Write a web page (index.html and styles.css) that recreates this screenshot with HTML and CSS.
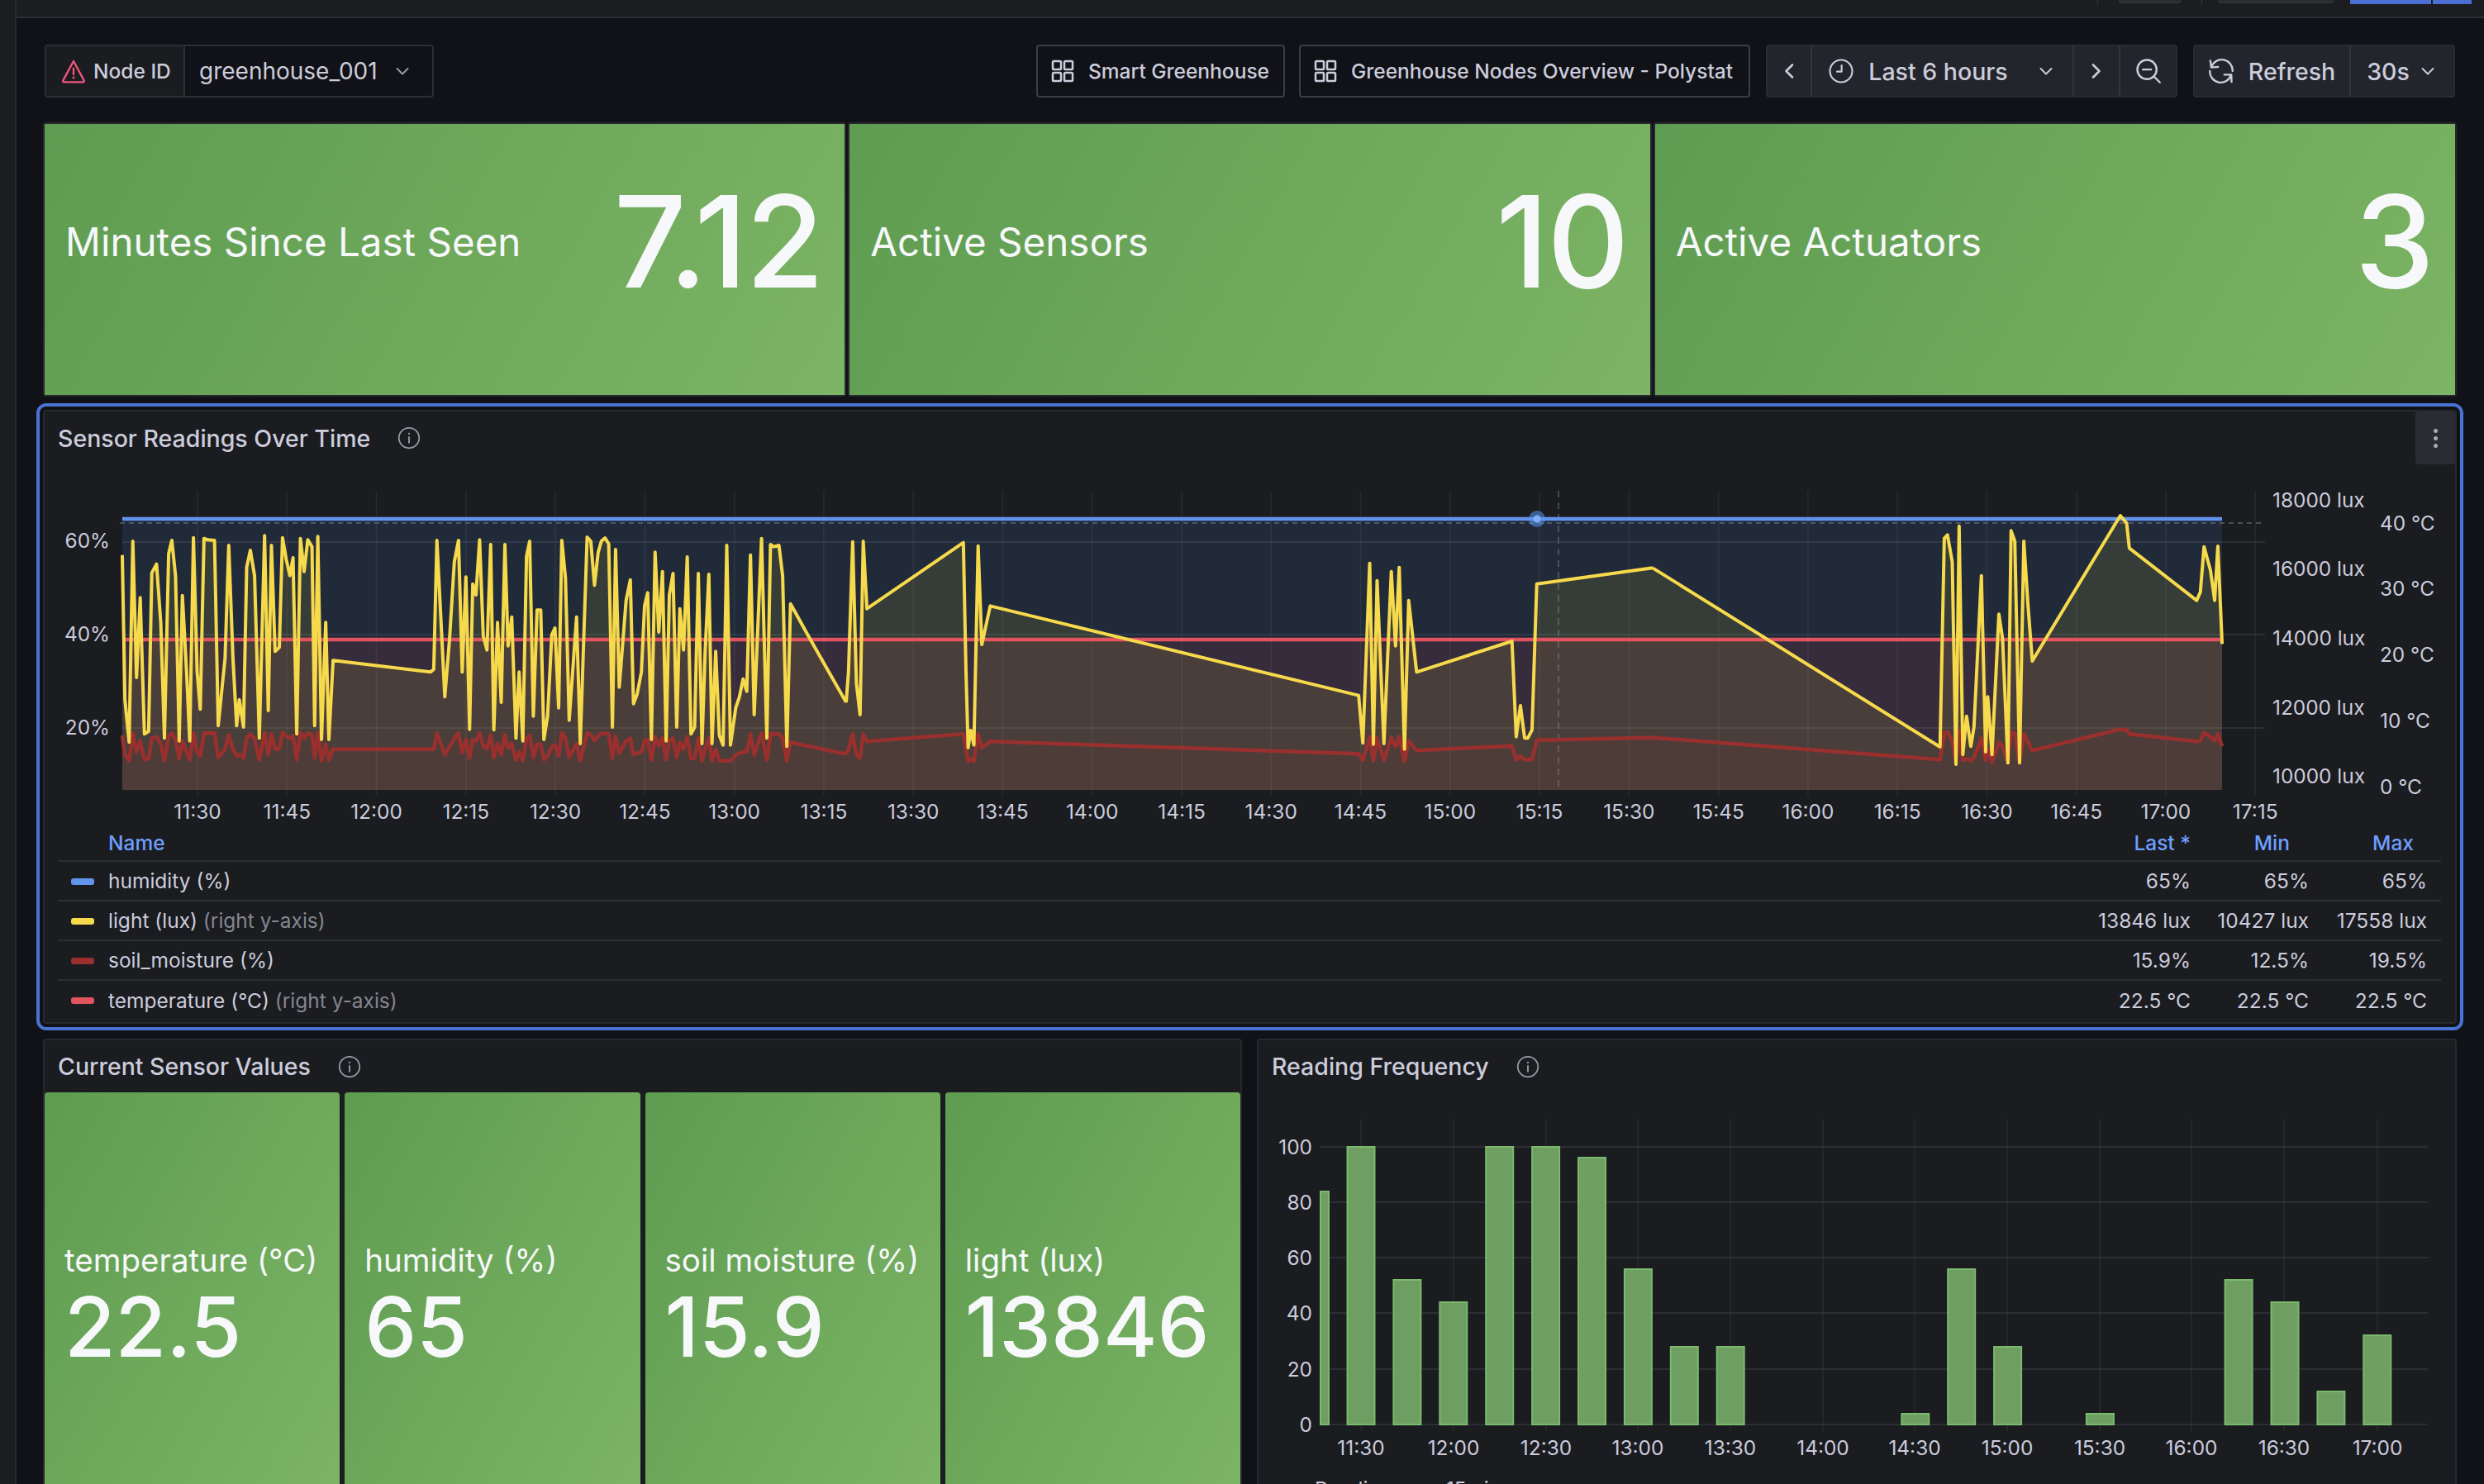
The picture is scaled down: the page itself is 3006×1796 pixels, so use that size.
FILE: index.html
```html
<!DOCTYPE html>
<html lang="en">
<head>
    <meta charset="UTF-8">
    <title>Greenhouse Node Details</title>
    <link rel="stylesheet" href="styles.css">
</head>
<body>
    <svg class="icon-defs" width="0" height="0">
        <symbol id="i-chevron-down" viewBox="0 0 24 24"><path d="M5.500 9l6.500 6.500L18.500 9" fill="none" stroke="currentColor" stroke-width="2" stroke-linecap="round" stroke-linejoin="round"/></symbol>
        <symbol id="i-chevron-left" viewBox="0 0 24 24"><path d="M16 4.500L8.500 12l7.500 7.500" fill="none" stroke="currentColor" stroke-width="2.600" stroke-linecap="round" stroke-linejoin="round"/></symbol>
        <symbol id="i-chevron-right" viewBox="0 0 24 24"><path d="M8 4.500l7.500 7.500L8 19.500" fill="none" stroke="currentColor" stroke-width="2.600" stroke-linecap="round" stroke-linejoin="round"/></symbol>
        <symbol id="i-apps" viewBox="0 0 24 24"><g fill="none" stroke="currentColor" stroke-width="1.900"><rect x="3" y="3" width="7.500" height="7.500" rx="1"/><rect x="13.500" y="3" width="7.500" height="7.500" rx="1"/><rect x="3" y="13.500" width="7.500" height="7.500" rx="1"/><rect x="13.500" y="13.500" width="7.500" height="7.500" rx="1"/></g></symbol>
        <symbol id="i-info" viewBox="0 0 24 24"><circle cx="12" cy="12" r="10.500" fill="none" stroke="currentColor" stroke-width="1.500"/><path d="M12 11v6" stroke="currentColor" stroke-width="1.600" stroke-linecap="round"/><circle cx="12" cy="7.600" r="1" fill="currentColor"/></symbol>
    </svg>

    <div class="sidebar"></div>

    <div class="page">
        <div class="topbar">
            <span class="top-sep"></span>
            <span class="top-btn top-btn-small"></span>
            <span class="top-sep"></span>
            <span class="top-btn top-btn-wide"></span>
            <span class="top-btn-blue"></span>
            <span class="top-btn-blue-end"></span>
        </div>

        <div class="dashboard">
            <div class="toolbar">
                <div class="variable">
                    <div class="variable-label">
                        <svg class="icon-warning" viewBox="0 0 24 24"><path d="M12 3L2.500 20.500a1 1 0 0 0 .9 1.500h17.200a1 1 0 0 0 .9-1.500z" fill="none" stroke="#f0557a" stroke-width="1.800" stroke-linejoin="round"/><path d="M12 9.500v5.500" stroke="#f0557a" stroke-width="1.800" stroke-linecap="round"/><circle cx="12" cy="18" r="1.100" fill="#f0557a"/></svg>
                        Node ID
                    </div>
                    <div class="variable-value">
                        greenhouse_001
                        <svg class="icon-sm"><use href="#i-chevron-down"/></svg>
                    </div>
                </div>

                <div class="toolbar-right">
                    <a class="link-btn link-btn-a"><svg class="icon-apps"><use href="#i-apps"/></svg>Smart Greenhouse</a>
                    <a class="link-btn link-btn-b"><svg class="icon-apps"><use href="#i-apps"/></svg>Greenhouse Nodes Overview - Polystat</a>

                    <div class="btn-group time-group">
                        <div class="group-cell cell-prev"><svg class="icon-sm"><use href="#i-chevron-left"/></svg></div>
                        <div class="group-cell cell-range">
                            <svg class="icon" viewBox="0 0 24 24"><circle cx="12" cy="12" r="10.800" fill="none" stroke="currentColor" stroke-width="1.700"/><path d="M12.500 6.500V12.500H8" fill="none" stroke="currentColor" stroke-width="1.700" stroke-linecap="round" stroke-linejoin="round"/></svg>
                            <span class="range-text">Last 6 hours</span>
                            <svg class="icon-sm"><use href="#i-chevron-down"/></svg>
                        </div>
                        <div class="group-cell cell-next"><svg class="icon-sm"><use href="#i-chevron-right"/></svg></div>
                        <div class="group-cell cell-zoom">
                            <svg class="icon" viewBox="0 0 24 24"><circle cx="10.500" cy="10.500" r="9.300" fill="none" stroke="currentColor" stroke-width="1.900"/><path d="M6.500 10.500h8M17.300 17.300L23 23" fill="none" stroke="currentColor" stroke-width="1.900" stroke-linecap="round"/></svg>
                        </div>
                    </div>

                    <div class="btn-group refresh-group">
                        <div class="group-cell cell-refresh">
                            <svg class="icon" viewBox="0 0 24 24"><g fill="none" stroke="currentColor" stroke-width="1.900" stroke-linecap="round" stroke-linejoin="round"><path d="M1.500 2L2.300 8.500 9 8M2.500 8.300A10.500 10.500 0 0 1 23 12"/><path d="M1 12A10.500 10.500 0 0 0 21.500 15.700M15 15.500H21.800L22 22.500"/></g></svg>
                            Refresh
                        </div>
                        <div class="group-cell cell-interval">
                            30s
                            <svg class="icon-sm"><use href="#i-chevron-down"/></svg>
                        </div>
                    </div>
                </div>
            </div>

            <div class="stats">
                <div class="stat-card"><div class="stat"><span class="stat-label">Minutes Since Last Seen</span><span class="stat-value">7.12</span></div></div>
                <div class="stat-card"><div class="stat"><span class="stat-label">Active Sensors</span><span class="stat-value">10</span></div></div>
                <div class="stat-card"><div class="stat"><span class="stat-label">Active Actuators</span><span class="stat-value">3</span></div></div>
            </div>

            <div class="panel panel-focus">
                <div class="panel-head">
                    <span class="panel-title">Sensor Readings Over Time</span>
                    <svg class="icon-info"><use href="#i-info"/></svg>
                    <span class="panel-menu"><i></i><i></i><i></i></span>
                </div>

                <!-- coordinates below are page pixels, the three .seg groups are traced in sections -->
                <svg class="chart chart-lines" viewBox="54 590 2917 408">
                    <g class="grid-v">
                        <path d="M239 594V963M347.300 594V963M455.500 594V963M563.800 594V963M672.100 594V963M780.400 594V963M888.600 594V963M996.900 594V963M1105.200 594V963M1213.400 594V963M1321.700 594V963M1430 594V963M1538.200 594V963M1646.500 594V963M1754.800 594V963M1863 594V963M1971.300 594V963M2079.600 594V963M2187.900 594V963M2296.100 594V963M2404.400 594V963M2512.700 594V963M2620.900 594V963M2729.200 594V963"/>
                    </g>
                    <g class="grid-h">
                        <path d="M148 656H2741M148 768H2741M148 881H2741"/>
                    </g>
                    <path class="threshold" d="M145 633H2741"/>
                    <path class="crosshair" d="M1886 594V956"/>

                    <rect class="fill-blue" x="148" y="628" width="2541" height="328"/>
                    <rect class="fill-red" x="148" y="774" width="2541" height="182"/>

                    <g class="seg" transform="translate(30 480) scale(.63776 .33333)">
                        <polygon class="fill-yellow" points="185,1428 185,575 190,1100 198,1255 205,525 212,1020 219,730 227,1225 235,1215 241,640 250,608 258,820 265,1240 273,570 279,522 286,650 293,1250 299,722 307,1000 313,1250 320,512 327,1000 333,1135 340,515 347,520 360,522 367,1195 380,950 387,540 395,950 402,1195 407,1100 415,1200 421,620 428,558 436,650 445,1240 455,505 462,1140 468,540 475,925 483,910 489,512 496,590 503,650 509,585 516,1225 523,515 530,635 537,520 545,545 550,1195 556,508 563,1245 571,820 577,1245 585,958 770,1000 776,990 782,522 797,1090 806,880 815,600 823,522 830,1000 837,655 844,1208 850,680 856,720 863,520 870,870 877,920 884,537 890,1210 897,820 904,1110 911,537 917,905 924,800 932,1240 938,1000 945,1250 952,580 958,525 965,1160 972,775 979,775 985,1245 992,1160 1000,865 1006,840 1013,1130 1019,522 1026,660 1033,1175 1047,800 1054,1260 1067,510 1074,525 1081,685 1088,565 1094,525 1101,513 1108,535 1115,1200 1121,555 1128,1055 1141,740 1149,665 1155,1115 1162,1080 1170,1000 1176,760 1182,712 1189,1245 1196,565 1203,855 1210,635 1217,1250 1223,720 1230,642 1237,1200 1243,770 1250,920 1257,582 1264,1225 1271,1200 1278,642 1285,1260 1291,925 1298,645 1304,1260 1311,925 1318,1230 1325,1265 1332,540 1339,1265 1349,1130 1356,1090 1363,1025 1370,1070 1377,575 1384,1155 1398,515 1408,1240 1415,537 1421,545 1431,540 1438,650 1446,1270 1453,752 1490,880 1558.600,1110 1558.600,1428"/>
                        <polygon class="fill-soil" points="185,1428 185,1230 190,1300 198,1322 205,1222 212,1290 219,1250 227,1318 235,1315 241,1240 250,1235 258,1262 265,1322 273,1230 279,1222 286,1245 293,1315 299,1250 307,1290 313,1318 320,1222 327,1290 333,1305 340,1222 360,1222 367,1310 380,1280 387,1228 395,1280 402,1305 407,1300 415,1312 421,1240 428,1226 436,1240 445,1320 455,1220 462,1300 468,1225 475,1280 483,1278 489,1220 496,1232 503,1240 509,1232 516,1318 523,1220 530,1240 537,1222 545,1228 550,1312 556,1220 563,1322 571,1262 577,1320 585,1280 776,1280 782,1222 797,1300 806,1272 815,1240 823,1222 830,1292 837,1245 844,1312 850,1245 856,1250 863,1222 870,1270 877,1278 884,1228 890,1310 897,1260 904,1300 911,1228 917,1275 924,1260 932,1320 938,1290 945,1322 952,1240 958,1230 965,1310 972,1262 979,1262 985,1318 992,1305 1000,1270 1006,1265 1013,1305 1019,1222 1026,1240 1033,1310 1047,1260 1054,1322 1067,1222 1074,1228 1081,1248 1088,1232 1094,1222 1108,1225 1115,1312 1121,1232 1128,1295 1141,1250 1149,1240 1155,1300 1170,1290 1176,1250 1182,1245 1189,1320 1196,1235 1203,1268 1210,1240 1217,1318 1223,1250 1230,1240 1237,1310 1243,1255 1250,1280 1257,1235 1264,1315 1271,1312 1278,1240 1285,1322 1291,1280 1298,1240 1304,1322 1311,1280 1318,1322 1340,1322 1350,1300 1363,1290 1370,1290 1377,1225 1384,1300 1398,1222 1408,1320 1415,1225 1431,1225 1438,1240 1446,1322 1453,1255 1558.600,1298 1558.600,1428"/>
                    </g>
                    <g class="seg" transform="translate(1000 480) scale(.63776 .33333)">
                        <polygon class="fill-yellow" points="37.600,1428 37.600,1110 42,1000 50,527 57,1040 64,1155 70,525 77,770 260,530 265,1000 269,1275 274,1212 280,1265 288,542 295,900 311,760 1010,1085 1018,1258 1031,605 1038,1262 1045,668 1058,1260 1072,635 1080,905 1087,620 1097,1280 1105,740 1120,1000 1301,888 1309,1235 1317,1122 1325,1240 1331,1240 1339,1210 1348,680 1568,622 1568,1428"/>
                        <polygon class="fill-soil" points="37.600,1428 37.600,1298 42,1280 50,1225 57,1300 64,1312 70,1225 77,1252 260,1225 269,1325 274,1315 280,1322 288,1225 295,1275 311,1252 1010,1297 1018,1320 1031,1235 1038,1322 1045,1240 1058,1320 1072,1238 1080,1270 1087,1235 1097,1325 1105,1250 1120,1285 1301,1268 1309,1320 1317,1305 1325,1318 1339,1318 1348,1247 1568,1238 1568,1428"/>
                    </g>
                    <g class="seg" transform="translate(2000 480) scale(.64158 .33333)">
                        <polygon class="fill-yellow" points="0,1428 0,622 542,1272 550,515 556,502 565,600 572,1335 578,470 585,1300 592,1160 600,1270 606,1200 620,650 628,1290 632,1090 640,1300 653,790 660,880 670,1330 676,487 683,525 692,1330 700,525 708,760 716,960 882,432 894,460 899,550 1026,740 1033,710 1040,545 1052,630 1060,740 1066,543 1074,898 1074,1428"/>
                        <polygon class="fill-soil" points="0,1428 0,1238 542,1318 550,1222 556,1218 565,1250 572,1332 578,1215 585,1320 592,1315 600,1322 606,1310 620,1240 628,1320 632,1280 640,1328 653,1255 660,1270 670,1330 676,1218 683,1222 692,1330 700,1225 716,1285 882,1208 894,1210 899,1225 1026,1252 1033,1248 1040,1220 1052,1235 1060,1250 1066,1225 1074,1270 1074,1428"/>
                    </g>

                    <path class="line-blue" d="M148 628H2689"/>
                    <path class="line-red" d="M148 774H2689"/>

                    <g class="seg" transform="translate(30 480) scale(.63776 .33333)">
                        <polyline class="line-soil" points="185,1230 190,1300 198,1322 205,1222 212,1290 219,1250 227,1318 235,1315 241,1240 250,1235 258,1262 265,1322 273,1230 279,1222 286,1245 293,1315 299,1250 307,1290 313,1318 320,1222 327,1290 333,1305 340,1222 360,1222 367,1310 380,1280 387,1228 395,1280 402,1305 407,1300 415,1312 421,1240 428,1226 436,1240 445,1320 455,1220 462,1300 468,1225 475,1280 483,1278 489,1220 496,1232 503,1240 509,1232 516,1318 523,1220 530,1240 537,1222 545,1228 550,1312 556,1220 563,1322 571,1262 577,1320 585,1280 776,1280 782,1222 797,1300 806,1272 815,1240 823,1222 830,1292 837,1245 844,1312 850,1245 856,1250 863,1222 870,1270 877,1278 884,1228 890,1310 897,1260 904,1300 911,1228 917,1275 924,1260 932,1320 938,1290 945,1322 952,1240 958,1230 965,1310 972,1262 979,1262 985,1318 992,1305 1000,1270 1006,1265 1013,1305 1019,1222 1026,1240 1033,1310 1047,1260 1054,1322 1067,1222 1074,1228 1081,1248 1088,1232 1094,1222 1108,1225 1115,1312 1121,1232 1128,1295 1141,1250 1149,1240 1155,1300 1170,1290 1176,1250 1182,1245 1189,1320 1196,1235 1203,1268 1210,1240 1217,1318 1223,1250 1230,1240 1237,1310 1243,1255 1250,1280 1257,1235 1264,1315 1271,1312 1278,1240 1285,1322 1291,1280 1298,1240 1304,1322 1311,1280 1318,1322 1340,1322 1350,1300 1363,1290 1370,1290 1377,1225 1384,1300 1398,1222 1408,1320 1415,1225 1431,1225 1438,1240 1446,1322 1453,1255 1558.600,1298"/>
                        <polyline class="line-yellow" points="185,575 190,1100 198,1255 205,525 212,1020 219,730 227,1225 235,1215 241,640 250,608 258,820 265,1240 273,570 279,522 286,650 293,1250 299,722 307,1000 313,1250 320,512 327,1000 333,1135 340,515 347,520 360,522 367,1195 380,950 387,540 395,950 402,1195 407,1100 415,1200 421,620 428,558 436,650 445,1240 455,505 462,1140 468,540 475,925 483,910 489,512 496,590 503,650 509,585 516,1225 523,515 530,635 537,520 545,545 550,1195 556,508 563,1245 571,820 577,1245 585,958 770,1000 776,990 782,522 797,1090 806,880 815,600 823,522 830,1000 837,655 844,1208 850,680 856,720 863,520 870,870 877,920 884,537 890,1210 897,820 904,1110 911,537 917,905 924,800 932,1240 938,1000 945,1250 952,580 958,525 965,1160 972,775 979,775 985,1245 992,1160 1000,865 1006,840 1013,1130 1019,522 1026,660 1033,1175 1047,800 1054,1260 1067,510 1074,525 1081,685 1088,565 1094,525 1101,513 1108,535 1115,1200 1121,555 1128,1055 1141,740 1149,665 1155,1115 1162,1080 1170,1000 1176,760 1182,712 1189,1245 1196,565 1203,855 1210,635 1217,1250 1223,720 1230,642 1237,1200 1243,770 1250,920 1257,582 1264,1225 1271,1200 1278,642 1285,1260 1291,925 1298,645 1304,1260 1311,925 1318,1230 1325,1265 1332,540 1339,1265 1349,1130 1356,1090 1363,1025 1370,1070 1377,575 1384,1155 1398,515 1408,1240 1415,537 1421,545 1431,540 1438,650 1446,1270 1453,752 1490,880 1558.600,1110"/>
                    </g>
                    <g class="seg" transform="translate(1000 480) scale(.63776 .33333)">
                        <polyline class="line-soil" points="37.600,1298 42,1280 50,1225 57,1300 64,1312 70,1225 77,1252 260,1225 269,1325 274,1315 280,1322 288,1225 295,1275 311,1252 1010,1297 1018,1320 1031,1235 1038,1322 1045,1240 1058,1320 1072,1238 1080,1270 1087,1235 1097,1325 1105,1250 1120,1285 1301,1268 1309,1320 1317,1305 1325,1318 1339,1318 1348,1247 1568,1238"/>
                        <polyline class="line-yellow" points="37.600,1110 42,1000 50,527 57,1040 64,1155 70,525 77,770 260,530 265,1000 269,1275 274,1212 280,1265 288,542 295,900 311,760 1010,1085 1018,1258 1031,605 1038,1262 1045,668 1058,1260 1072,635 1080,905 1087,620 1097,1280 1105,740 1120,1000 1301,888 1309,1235 1317,1122 1325,1240 1331,1240 1339,1210 1348,680 1568,622"/>
                    </g>
                    <g class="seg" transform="translate(2000 480) scale(.64158 .33333)">
                        <polyline class="line-soil" points="0,1238 542,1318 550,1222 556,1218 565,1250 572,1332 578,1215 585,1320 592,1315 600,1322 606,1310 620,1240 628,1320 632,1280 640,1328 653,1255 660,1270 670,1330 676,1218 683,1222 692,1330 700,1225 716,1285 882,1208 894,1210 899,1225 1026,1252 1033,1248 1040,1220 1052,1235 1060,1250 1066,1225 1074,1270"/>
                        <polyline class="line-yellow" points="0,622 542,1272 550,515 556,502 565,600 572,1335 578,470 585,1300 592,1160 600,1270 606,1200 620,650 628,1290 632,1090 640,1300 653,790 660,880 670,1330 676,487 683,525 692,1330 700,525 708,760 716,960 882,432 894,460 899,550 1026,740 1033,710 1040,545 1052,630 1060,740 1066,543 1074,898"/>
                    </g>

                    <circle class="point-halo" cx="1860" cy="628" r="10"/>
                    <circle class="point" cx="1860" cy="628" r="4.500"/>

                    <g class="axis axis-end">
                        <text x="133" y="654">60%</text>
                        <text x="133" y="767">40%</text>
                        <text x="133" y="880">20%</text>
                    </g>
                    <g class="axis">
                        <text x="2750" y="605">18000 lux</text>
                        <text x="2750" y="688">16000 lux</text>
                        <text x="2750" y="772">14000 lux</text>
                        <text x="2750" y="856">12000 lux</text>
                        <text x="2750" y="939">10000 lux</text>
                        <text x="2880" y="633">40 °C</text>
                        <text x="2880" y="712">30 °C</text>
                        <text x="2880" y="792">20 °C</text>
                        <text x="2880" y="872">10 °C</text>
                        <text x="2880" y="952">0 °C</text>
                    </g>
                    <g class="axis axis-mid">
                        <text x="239" y="982">11:30</text>
                        <text x="347.300" y="982">11:45</text>
                        <text x="455.500" y="982">12:00</text>
                        <text x="563.800" y="982">12:15</text>
                        <text x="672.100" y="982">12:30</text>
                        <text x="780.400" y="982">12:45</text>
                        <text x="888.600" y="982">13:00</text>
                        <text x="996.900" y="982">13:15</text>
                        <text x="1105.200" y="982">13:30</text>
                        <text x="1213.400" y="982">13:45</text>
                        <text x="1321.700" y="982">14:00</text>
                        <text x="1430" y="982">14:15</text>
                        <text x="1538.200" y="982">14:30</text>
                        <text x="1646.500" y="982">14:45</text>
                        <text x="1754.800" y="982">15:00</text>
                        <text x="1863" y="982">15:15</text>
                        <text x="1971.300" y="982">15:30</text>
                        <text x="2079.600" y="982">15:45</text>
                        <text x="2187.900" y="982">16:00</text>
                        <text x="2296.100" y="982">16:15</text>
                        <text x="2404.400" y="982">16:30</text>
                        <text x="2512.700" y="982">16:45</text>
                        <text x="2620.900" y="982">17:00</text>
                        <text x="2729.200" y="982">17:15</text>
                    </g>
                </svg>

                <table class="legend">
                    <thead>
                        <tr><th class="col-name">Name</th><th>Last *</th><th class="th-min">Min</th><th class="th-max">Max</th></tr>
                    </thead>
                    <tbody>
                        <tr>
                            <td class="col-name"><span class="swatch swatch-blue"></span>humidity (%)</td>
                            <td>65%</td><td>65%</td><td>65%</td>
                        </tr>
                        <tr>
                            <td class="col-name"><span class="swatch swatch-yellow"></span>light (lux) <span class="muted">(right y-axis)</span></td>
                            <td>13846 lux</td><td>10427 lux</td><td>17558 lux</td>
                        </tr>
                        <tr>
                            <td class="col-name"><span class="swatch swatch-soil"></span>soil_moisture (%)</td>
                            <td>15.9%</td><td>12.5%</td><td>19.5%</td>
                        </tr>
                        <tr>
                            <td class="col-name"><span class="swatch swatch-red"></span>temperature (°C) <span class="muted">(right y-axis)</span></td>
                            <td>22.5 °C</td><td>22.5 °C</td><td>22.5 °C</td>
                        </tr>
                    </tbody>
                </table>
            </div>

            <div class="bottom-row">
                <div class="panel panel-values">
                    <div class="panel-head panel-head-bottom">
                        <span class="panel-title">Current Sensor Values</span>
                        <svg class="icon-info"><use href="#i-info"/></svg>
                    </div>
                    <div class="tiles">
                        <div class="tile"><span class="tile-label">temperature (°C)</span><span class="tile-value">22.5</span></div>
                        <div class="tile"><span class="tile-label">humidity (%)</span><span class="tile-value">65</span></div>
                        <div class="tile"><span class="tile-label">soil moisture (%)</span><span class="tile-value">15.9</span></div>
                        <div class="tile"><span class="tile-label">light (lux)</span><span class="tile-value">13846</span></div>
                    </div>
                </div>

                <div class="panel panel-freq">
                    <div class="panel-head panel-head-bottom">
                        <span class="panel-title">Reading Frequency</span>
                        <svg class="icon-info"><use href="#i-info"/></svg>
                    </div>
                    <svg class="chart chart-bars" viewBox="1523 1345 1448 470">
                        <g class="grid-v">
                            <path d="M1647 1355V1732M1759 1355V1732M1871 1355V1732M1982 1355V1732M2094 1355V1732M2206 1355V1732M2317 1355V1732M2429 1355V1732M2541 1355V1732M2652 1355V1732M2764 1355V1732M2877 1355V1732"/>
                        </g>
                        <g class="grid-h">
                            <path d="M1598 1388H2938M1598 1455H2938M1598 1522H2938M1598 1589H2938M1598 1657H2938M1598 1724H2938"/>
                        </g>
                        <g class="bars">
                            <rect x="1598" y="1442" width="10" height="282"/>
                            <rect x="1630.500" y="1388" width="33" height="336"/>
                            <rect x="1686.400" y="1549" width="33" height="175"/>
                            <rect x="1742.300" y="1576" width="33" height="148"/>
                            <rect x="1798.200" y="1388" width="33" height="336"/>
                            <rect x="1854.100" y="1388" width="33" height="336"/>
                            <rect x="1910" y="1401" width="33" height="323"/>
                            <rect x="1965.900" y="1536" width="33" height="188"/>
                            <rect x="2021.800" y="1630" width="33" height="94"/>
                            <rect x="2077.700" y="1630" width="33" height="94"/>
                            <rect x="2301.300" y="1711" width="33" height="13"/>
                            <rect x="2357.200" y="1536" width="33" height="188"/>
                            <rect x="2413.100" y="1630" width="33" height="94"/>
                            <rect x="2524.900" y="1711" width="33" height="13"/>
                            <rect x="2692.600" y="1549" width="33" height="175"/>
                            <rect x="2748.500" y="1576" width="33" height="148"/>
                            <rect x="2804.400" y="1684" width="33" height="40"/>
                            <rect x="2860.300" y="1616" width="33" height="108"/>
                        </g>
                        <g class="axis axis-end">
                            <text x="1588" y="1388">100</text>
                            <text x="1588" y="1455">80</text>
                            <text x="1588" y="1522">60</text>
                            <text x="1588" y="1589">40</text>
                            <text x="1588" y="1657">20</text>
                            <text x="1588" y="1724">0</text>
                        </g>
                        <g class="axis axis-mid">
                            <text x="1647" y="1752">11:30</text>
                            <text x="1759" y="1752">12:00</text>
                            <text x="1871" y="1752">12:30</text>
                            <text x="1982" y="1752">13:00</text>
                            <text x="2094" y="1752">13:30</text>
                            <text x="2206" y="1752">14:00</text>
                            <text x="2317" y="1752">14:30</text>
                            <text x="2429" y="1752">15:00</text>
                            <text x="2541" y="1752">15:30</text>
                            <text x="2652" y="1752">16:00</text>
                            <text x="2764" y="1752">16:30</text>
                            <text x="2877" y="1752">17:00</text>
                        </g>
                        <text class="bars-legend" x="1591" y="1802">Readings per 15min</text>
                    </svg>
                </div>
            </div>
        </div>
    </div>
</body>
</html>
```

FILE: styles.css
```css
* {
    box-sizing: border-box;
}
html, body {
    height: 100%;
}
body {
    margin: 0;
    display: flex;
    height: 1796px;
    overflow: hidden;
    background-color: #111217;
    color: #ccccdc;
    font-family: Inter, "Liberation Sans", sans-serif;
    font-size: 26px;
}
.icon-defs {
    position: absolute;
}

/* Sidebar and top bar */
.sidebar {
    flex: 0 0 20px;
    background-color: #1b1d21;
    border-right: 2px solid #26282c;
}
.page {
    flex: 1;
    min-width: 0;
}
.topbar {
    height: 22px;
    display: flex;
    align-items: flex-start;
    justify-content: flex-end;
    padding-right: 15px;
    background-color: #1b1d21;
    border-bottom: 2px solid #2c2e33;
}
.top-sep {
    width: 1px;
    height: 5px;
    background-color: #3a3c41;
}
.top-btn {
    height: 4px;
    background-color: #2a2c31;
    border-radius: 0 0 4px 4px;
    border: 1px solid #37393e;
    border-top: none;
}
.top-btn-small {
    width: 75px;
    margin: 0 25px;
}
.top-btn-wide {
    width: 140px;
    margin: 0 20px 0 19px;
}
.top-btn-blue {
    width: 98px;
    height: 5px;
    background-color: #4a6fd0;
}
.top-btn-blue-end {
    width: 47px;
    height: 5px;
    margin-left: 2px;
    background-color: #4a6fd0;
}

/* Dashboard */
.dashboard {
    padding: 32px 33px 0 32px;
}
.toolbar {
    height: 64px;
    margin: 0 2px 30px;
    display: flex;
    justify-content: space-between;
}
.icon {
    width: 30px;
    height: 30px;
    flex: none;
}
.icon-sm {
    width: 24px;
    height: 24px;
    flex: none;
}
.icon-apps {
    width: 32px;
    height: 32px;
    flex: none;
}
.variable {
    display: flex;
    width: 471px;
    border: 2px solid #2c2e33;
    border-radius: 4px;
}
.variable-label {
    width: 168px;
    display: flex;
    align-items: center;
    gap: 8px;
    padding-left: 17px;
    font-size: 24.500px;
    font-weight: 500;
    background-color: #1a1c20;
    border-right: 2px solid #2c2e33;
}
.icon-warning {
    width: 32px;
    height: 32px;
    flex: none;
}
.variable-value {
    display: flex;
    align-items: center;
    gap: 18px;
    padding-left: 17px;
    font-size: 28px;
}
.variable-value .icon-sm {
    color: #9a9aa8;
}
.toolbar-right {
    display: flex;
    gap: 19px;
}
.link-btn {
    display: flex;
    align-items: center;
    gap: 15px;
    padding-left: 14px;
    font-size: 24.500px;
    font-weight: 500;
    white-space: nowrap;
    border: 2px solid #3c3e44;
    border-radius: 4px;
}
.link-btn-a {
    width: 301px;
    margin-right: -2px;
}
.link-btn-b {
    width: 546px;
}
.btn-group {
    display: flex;
    background-color: #22252b;
    border: 2px solid #2a2c32;
    border-radius: 4px;
}
.group-cell {
    display: flex;
    align-items: center;
    justify-content: center;
    font-weight: 500;
    font-size: 28.500px;
    border-right: 2px solid #33353b;
}
.group-cell:last-child {
    border-right: none;
}
.cell-prev {
    width: 54px;
}
.cell-range {
    width: 317px;
    gap: 18px;
}
.range-text {
    margin-right: 16px;
}
.cell-next {
    width: 56px;
}
.cell-zoom {
    width: 67px;
}
.cell-refresh {
    width: 189px;
    gap: 18px;
}
.cell-interval {
    width: 124px;
    gap: 10px;
}

/* Stat panels */
.stats {
    display: grid;
    grid-template-columns: repeat(3, 1fr);
    gap: 2px;
    height: 332px;
    margin-bottom: 16px;
}
.stat-card {
    border: 2px solid #26282d;
    border-radius: 4px;
}
.stat {
    height: 100%;
    display: flex;
    align-items: center;
    justify-content: space-between;
    padding: 0 27px 44px 25px;
    color: #f7f8fa;
    background: linear-gradient(120deg, #5e9c51, #7db465);
}
.stat-label {
    font-size: 47.500px;
}
.stat-value {
    font-size: 154px;
    font-weight: 500;
    letter-spacing: -2px;
}

/* Panels */
.panel {
    background-color: #1a1c20;
    border: 2px solid #26282d;
    border-radius: 4px;
}
.panel-focus {
    height: 743px;
    margin-bottom: 18px;
    outline: 4px solid #4a72d4;
    outline-offset: 4px;
}
.panel-head {
    height: 64px;
    display: flex;
    align-items: center;
    gap: 33px;
    padding-left: 16px;
}
.panel-title {
    font-size: 28.500px;
    font-weight: 500;
}
.icon-info {
    width: 28px;
    height: 28px;
    color: #9a9aa8;
}
.panel-menu {
    margin-left: auto;
    width: 48px;
    height: 64px;
    display: flex;
    flex-direction: column;
    align-items: center;
    justify-content: center;
    gap: 4px;
    background-color: #2a2c31;
    border-radius: 4px;
}
.panel-menu i {
    width: 5px;
    height: 5px;
    border-radius: 50%;
    background-color: #ababb8;
}
.panel-head-bottom {
    height: 63px;
}

/* Charts */
.chart {
    display: block;
    width: 100%;
}
.chart-lines {
    height: 408px;
    margin-top: 28px;
}
.chart-bars {
    height: 470px;
    margin-top: 23px;
}
.chart text {
    fill: #ccccdc;
    font-size: 24.400px;
    dominant-baseline: central;
}
.grid-v path {
    stroke: rgba(204, 204, 220, 0.08);
    stroke-width: 1.500;
    fill: none;
}
.grid-h path {
    stroke: rgba(204, 204, 220, 0.14);
    stroke-width: 1.500;
    fill: none;
}
.threshold {
    stroke: #4b4e58;
    stroke-width: 2;
    stroke-dasharray: 6 5;
    fill: none;
}
.crosshair {
    stroke: #55575e;
    stroke-width: 1.500;
    stroke-dasharray: 8 6;
    fill: none;
}
.fill-blue {
    fill: rgba(87, 148, 242, 0.12);
}
.fill-red {
    fill: rgba(242, 73, 92, 0.1);
}
.fill-yellow {
    fill: rgba(250, 222, 42, 0.1);
}
.fill-soil {
    fill: rgba(196, 22, 42, 0.04);
}
.line-blue,
.line-red,
.line-yellow,
.line-soil {
    fill: none;
    stroke-linejoin: round;
    vector-effect: non-scaling-stroke;
}
.line-blue {
    stroke: #6394ec;
    stroke-width: 4.500;
}
.line-red {
    stroke: #e0535f;
    stroke-width: 4.500;
}
.line-yellow {
    stroke: #f6da4c;
    stroke-width: 4;
}
.line-soil {
    stroke: #9a302e;
    stroke-width: 4.500;
}
.point {
    fill: #86aef5;
}
.point-halo {
    fill: rgba(87, 148, 242, 0.55);
}
.axis-end text {
    text-anchor: end;
}
.axis-mid text {
    text-anchor: middle;
}
.bars rect {
    fill: #6f9e62;
    stroke: #79ba6d;
    stroke-width: 2;
}

/* Legend table */
.legend {
    width: 2884px;
    margin-left: 16px;
    border-collapse: collapse;
    table-layout: fixed;
    font-size: 24.500px;
}
.legend th,
.legend td {
    padding: 0 17px 0 0;
    text-align: right;
    font-weight: 400;
    white-space: nowrap;
}
.legend th {
    width: 143px;
    height: 44px;
    color: #6e9fff;
    font-weight: 500;
}
.legend td {
    height: 48px;
    border-top: 2px solid #2c2e33;
}
.legend .th-min {
    padding-right: 40px;
}
.legend .th-max {
    padding-right: 33px;
}
.legend .col-name {
    width: auto;
    text-align: left;
    padding-left: 61px;
    position: relative;
}
.swatch {
    position: absolute;
    left: 16px;
    top: 20px;
    width: 28px;
    height: 8px;
    border-radius: 3px;
}
.swatch-blue {
    background-color: #6394ec;
}
.swatch-yellow {
    background-color: #f6da4c;
}
.swatch-soil {
    background-color: #9a302e;
}
.swatch-red {
    background-color: #e0535f;
}
.muted {
    color: #85868f;
}

/* Bottom row */
.bottom-row {
    display: grid;
    grid-template-columns: 1451px 1fr;
    gap: 18px;
}
.bottom-row .panel {
    height: 560px;
}
.tiles {
    display: grid;
    grid-template-columns: repeat(4, 1fr);
    gap: 6px;
}
.tile {
    height: 490px;
    display: flex;
    flex-direction: column;
    padding: 178px 0 0 24px;
    color: #f7f8fa;
    background: linear-gradient(120deg, #5e9c51, #7db465);
    border-radius: 4px 4px 0 0;
}
.tile-label {
    font-size: 38.500px;
    line-height: 50px;
    white-space: nowrap;
}
.tile-value {
    font-size: 100px;
    font-weight: 500;
    line-height: 108px;
    margin-top: 2px;
}
```
